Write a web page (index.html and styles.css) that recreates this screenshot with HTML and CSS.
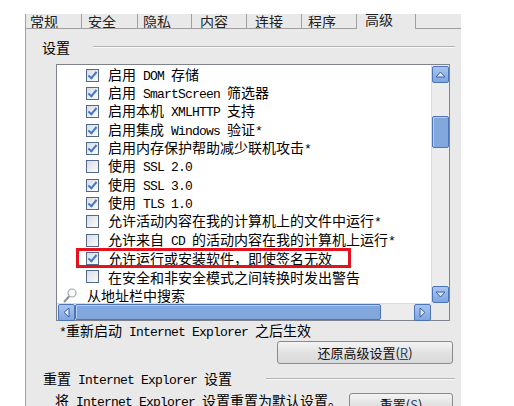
FILE: index.html
```html
<!DOCTYPE html>
<html lang="zh-CN">
<head>
    <meta charset="UTF-8">
    <title>Internet 选项 - 高级</title>
    <link rel="stylesheet" href="styles.css">
</head>
<body>
    <div class="dialog">
        <div class="tabs">
            <div class="tab t1"><span>常规</span></div>
            <div class="tab t2"><span>安全</span></div>
            <div class="tab t3"><span>隐私</span></div>
            <div class="tab t4"><span>内容</span></div>
            <div class="tab t5"><span>连接</span></div>
            <div class="tab t6"><span>程序</span></div>
            <div class="tab active"><span>高级</span></div>
            <div class="tab-rest"></div>
        </div>

        <div class="page">
            <div class="group-title first">
                <span>设置</span>
                <i class="rule"></i>
            </div>

            <div class="listbox">
                <div class="list-content">
                    <div class="row sub"><span class="cb on"></span><span class="label">启用<span class="en"> DOM </span>存储</span></div>
                    <div class="row sub"><span class="cb on"></span><span class="label">启用<span class="en"> SmartScreen </span>筛选器</span></div>
                    <div class="row sub"><span class="cb on"></span><span class="label">启用本机<span class="en"> XMLHTTP </span>支持</span></div>
                    <div class="row sub"><span class="cb on"></span><span class="label">启用集成<span class="en"> Windows </span>验证<span class="en">*</span></span></div>
                    <div class="row sub"><span class="cb on"></span><span class="label">启用内存保护帮助减少联机攻击<span class="en">*</span></span></div>
                    <div class="row sub"><span class="cb"></span><span class="label">使用<span class="en"> SSL 2.0</span></span></div>
                    <div class="row sub"><span class="cb on"></span><span class="label">使用<span class="en"> SSL 3.0</span></span></div>
                    <div class="row sub"><span class="cb on"></span><span class="label">使用<span class="en"> TLS 1.0</span></span></div>
                    <div class="row sub"><span class="cb"></span><span class="label">允许活动内容在我的计算机上的文件中运行<span class="en">*</span></span></div>
                    <div class="row sub"><span class="cb"></span><span class="label">允许来自<span class="en"> CD </span>的活动内容在我的计算机上运行<span class="en">*</span></span></div>
                    <div class="row sub"><span class="cb on"></span><span class="label">允许运行或安装软件，即使签名无效</span><span class="mark"></span></div>
                    <div class="row sub"><span class="cb"></span><span class="label">在安全和非安全模式之间转换时发出警告</span></div>
                    <div class="row top">
                        <svg class="search-icon" width="14" height="15" viewBox="0 0 14 15">
                            <line x1="6" y1="8.5" x2="1.5" y2="13.5" stroke="#8b9099" stroke-width="2" stroke-linecap="round"/>
                            <circle cx="9" cy="5" r="4" fill="#fbfbfb" stroke="#a3a8b0" stroke-width="1.2"/>
                        </svg><span class="label">从地址栏中搜索</span>
                    </div>
                </div>

                <div class="vscroll">
                    <div class="sbtn">
                        <svg width="15" height="15" viewBox="0 0 15 15"><polygon points="3,10 7.5,5 12,10" fill="#dce7f7" stroke="#3b63a9" stroke-width="1"/></svg>
                    </div>
                    <div class="vtrack-top"></div>
                    <div class="vthumb"></div>
                    <div class="vtrack"></div>
                    <div class="sbtn">
                        <svg width="15" height="15" viewBox="0 0 15 15"><polygon points="3,5 7.5,10 12,5" fill="#dce7f7" stroke="#3b63a9" stroke-width="1"/></svg>
                    </div>
                </div>

                <div class="hscroll">
                    <div class="sbtn">
                        <svg width="15" height="15" viewBox="0 0 15 15"><polygon points="10,3 5,7.5 10,12" fill="#dce7f7" stroke="#3b63a9" stroke-width="1"/></svg>
                    </div>
                    <div class="hthumb"></div>
                    <div class="htrack"></div>
                    <div class="sbtn">
                        <svg width="15" height="15" viewBox="0 0 15 15"><polygon points="5,3 10,7.5 5,12" fill="#dce7f7" stroke="#3b63a9" stroke-width="1"/></svg>
                    </div>
                </div>

                <div class="corner"></div>
            </div>

            <p class="note"><span class="en">*</span>重新启动<span class="en"> Internet Explorer </span>之后生效</p>

            <div class="btn-row">
                <button class="btn wide">还原高级设置(<u>R</u>)</button>
            </div>

            <div class="group-title second">
                <span>重置<span class="en"> Internet Explorer </span>设置</span>
                <i class="rule"></i>
            </div>

            <div class="reset-row">
                <span class="reset-text">将<span class="en"> Internet Explorer </span>设置重置为默认设置。</span>
                <button class="btn small">重置(<u>S</u>)</button>
            </div>
        </div>
    </div>
</body>
</html>
```

FILE: styles.css
```css
:root {
    --panel: #e9e9e9;
    --edge: #a0a0a0;
    --scroll-blue: #82a7dc;
    --scroll-border: #4b74b9;
}

* {
    box-sizing: border-box;
}

body {
    margin: 0;
    background: #fff;
    font-family: "Noto Sans CJK SC", sans-serif;
    font-size: 14px;
    color: #000;
}

.en {
    font-family: "Liberation Mono", "Noto Sans CJK SC", monospace;
    font-size: 13px;
    letter-spacing: -0.8px;
}

.dialog {
    margin: 14px 0 0 25px;
    width: 436px;
    height: 392px;
    background: var(--panel);
    border-left: 1px solid var(--edge);
    overflow: hidden;
}

/* tab strip */
.tabs {
    display: flex;
    height: 15px;
}

.tab {
    height: 15px;
    line-height: 14px;
    padding-left: 6px;
    border-right: 1px solid var(--edge);
    border-bottom: 1px solid var(--edge);
    overflow: hidden;
    color: #222;
}

.tab span {
    display: block;
}

.t1 { width: 56px; padding-left: 4px; }
.t2 { width: 56px; }
.t3 { width: 54px; padding-left: 5px; }
.t4 { width: 55px; padding-left: 8px; }
.t5 { width: 55px; padding-left: 8px; }
.t6 { width: 55px; }

.tab.active {
    width: 59px;
    padding-left: 8px;
    border-bottom: none;
}

.tab.active span {
    margin-top: -2px;
}

.tab-rest {
    flex: 1;
    border-bottom: 1px solid var(--edge);
}

/* page body */
.page {
    padding: 0 6px 0 16px;
}

.group-title {
    display: flex;
    align-items: center;
    height: 18px;
    line-height: 18px;
}

.group-title.first {
    margin-top: 9px;
}

.group-title.second {
    margin-top: 6px;
    margin-left: 1px;
}

.rule {
    flex: 1;
    height: 2px;
    border-top: 1px solid #b4b4b4;
    border-bottom: 1px solid #fafafa;
}

.first .rule {
    margin-left: 23px;
}

.second .rule {
    margin-left: 34px;
}

/* list box */
.listbox {
    margin: 8px 0 0 14px;
    width: 394px;
    height: 257px;
    border: 1px solid #7f848c;
    background: #fff;
    display: grid;
    grid-template-columns: 1fr 18px;
    grid-template-rows: 1fr 17px;
}

.list-content {
    overflow: hidden;
    padding-top: 1px;
}

.row {
    position: relative;
    display: flex;
    align-items: center;
    height: 18.33px;
    white-space: nowrap;
}

.label {
    line-height: 18px;
}

.row.sub {
    padding-left: 29px;
}

.row.top {
    padding-left: 6px;
}

.search-icon {
    margin-right: 10px;
    flex: none;
}

.cb {
    flex: none;
    position: relative;
    width: 13px;
    height: 13px;
    margin-right: 9px;
    border: 1px solid #52698c;
    background: linear-gradient(135deg, #d8dde4, #fbfbfb);
}

.cb.on::after {
    content: "";
    position: absolute;
    left: 3px;
    top: 0;
    width: 3px;
    height: 7px;
    border: solid #4677c6;
    border-width: 0 2px 2px 0;
    transform: rotate(40deg);
}

/* annotation rectangle over the highlighted option */
.mark {
    position: absolute;
    left: 19px;
    top: -1px;
    width: 275px;
    height: 20px;
    border: 3px solid #e3121c;
}

/* scroll bars */
.vscroll {
    display: flex;
    flex-direction: column;
    background: #ececec;
    border-left: 1px solid #dadada;
}

.hscroll {
    display: flex;
    background: #ececec;
    border-top: 1px solid #dadada;
}

.corner {
    background: var(--panel);
}

.sbtn {
    flex: none;
    width: 17px;
    height: 17px;
    display: flex;
    align-items: center;
    justify-content: center;
    background: linear-gradient(#a9c5ee, #80a6dd);
    border: 1px solid var(--scroll-border);
    border-radius: 2px;
}

.vscroll .sbtn {
    margin-top: 1px;
}

.vtrack-top {
    height: 33px;
}

.vthumb {
    height: 32px;
    background: var(--scroll-blue);
    border: 1px solid var(--scroll-border);
    border-radius: 2px;
    box-shadow: inset 1px 1px 0 #b7cdef;
}

.vtrack {
    flex: 1;
}

.hscroll .sbtn {
    margin-left: 1px;
}

.hthumb {
    width: 306px;
    background: var(--scroll-blue);
    border: 1px solid var(--scroll-border);
    border-radius: 2px;
    box-shadow: inset 1px 1px 0 #b7cdef;
}

.htrack {
    flex: 1;
}

/* below the list */
.note {
    margin: 0 0 0 17px;
    height: 18px;
    line-height: 18px;
}

.btn-row {
    display: flex;
    justify-content: flex-end;
    margin-top: 2px;
    padding-right: 2px;
}

.btn {
    font-family: "Noto Sans CJK SC", sans-serif;
    font-size: 13px;
    color: #111;
    height: 23px;
    padding: 0;
    line-height: 20px;
    background: linear-gradient(#f4f4f4, #e2e2e2 50%, #d9d9d9);
    border: 1px solid #8a8a8a;
    border-radius: 3px;
}

.btn u {
    color: #2d4a7a;
}

.btn.wide {
    width: 176px;
}

.btn.small {
    width: 104px;
}

.reset-row {
    display: flex;
    align-items: flex-start;
    justify-content: space-between;
    margin-top: 3px;
    padding: 0 2px 0 13px;
}

.reset-text {
    line-height: 18px;
}

.reset-row .btn {
    margin-top: 2px;
}
```
